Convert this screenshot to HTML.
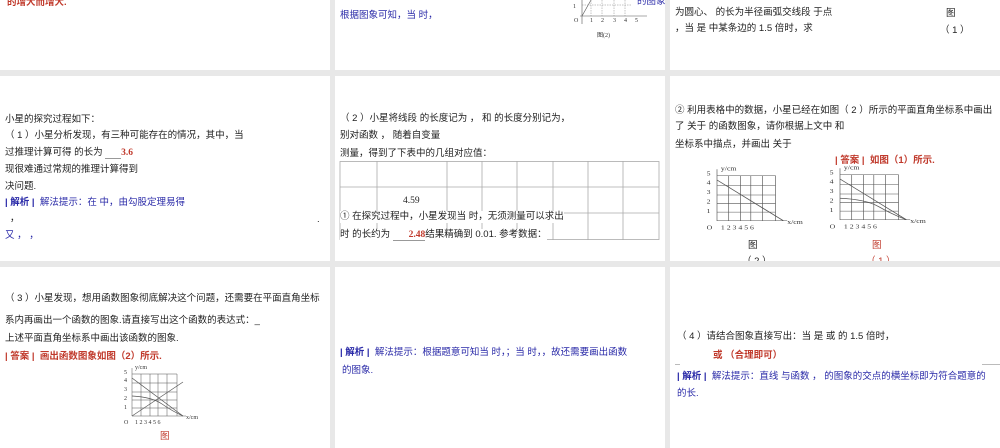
<!DOCTYPE html>
<html><head><meta charset="utf-8"><style>
body{margin:0;width:1000px;height:448px;background:#e8e8e8;position:relative;overflow:hidden;font-family:"Liberation Sans","Noto Sans CJK SC",sans-serif;font-size:9.5px;color:#222}
.p{position:absolute;background:#fff;overflow:hidden}
.t{position:absolute;white-space:nowrap;line-height:12px}
.r{color:#c0392b}.b{color:#2a2aa8}
.bold{font-weight:bold}
svg text{font-family:"Liberation Serif",serif;font-size:6px;fill:#333}
</style></head><body>
<!-- row1 -->
<div class="p" style="left:0;top:0;width:330px;height:70px">
<div class="t r bold" style="left:7px;top:-3px">的增大而增大.</div></div>
<div class="p" style="left:335px;top:0;width:330px;height:70px">
<div class="t b" style="left:5px;top:10px">根据图象可知，当 时，</div>
<svg style="position:absolute;left:237px;top:0" width="75" height="40">
<line x1="10" y1="0" x2="10" y2="24" stroke="#555" stroke-width=".6"/>
<line x1="8" y1="16" x2="75" y2="16" stroke="#555" stroke-width=".6"/>
<line x1="10" y1="16" x2="19" y2="0" stroke="#555" stroke-width=".6"/>
<line x1="10" y1="5" x2="60" y2="5" stroke="#888" stroke-width=".5" stroke-dasharray="1.5 1"/>
<g stroke="#888" stroke-width=".5" stroke-dasharray="1.5 1"><line x1="19" y1="0" x2="19" y2="16"/><line x1="30" y1="0" x2="30" y2="16"/><line x1="42" y1="0" x2="42" y2="16"/><line x1="53" y1="0" x2="53" y2="16"/></g>
<text x="1" y="8">1</text><text x="2" y="22">O</text><text x="18" y="22">1</text><text x="29" y="22">2</text><text x="41" y="22">3</text><text x="52" y="22">4</text><text x="63" y="22">5</text>
<text x="25" y="37">图(2)</text></svg>
<div class="t b" style="left:302px;top:-4px">的图象</div></div>
<div class="p" style="left:670px;top:0;width:330px;height:70px">
<div class="t" style="left:5px;top:7px">为圆心、 的长为半径画弧交线段 于点</div>
<div class="t" style="left:5px;top:23px">，当 是 中某条边的 1.5 倍时，求</div>
<div class="t" style="left:276px;top:8px">图</div>
<div class="t" style="left:270px;top:25px">（ 1 ）</div></div>
<!-- row2 -->
<div class="p" style="left:0;top:76px;width:330px;height:185px">
<div class="t" style="left:5px;top:38px">小星的探究过程如下：</div>
<div class="t" style="left:5px;top:54px">（ 1 ）小星分析发现，有三种可能存在的情况，其中，当</div>
<div class="t" style="left:5px;top:71px">过推理计算可得 的长为 <span style="border-bottom:1px solid #999">&nbsp;&nbsp;&nbsp;&nbsp;&nbsp;&nbsp;</span><span class="r bold" style="font-family:'Liberation Serif',serif">3.6</span></div>
<div class="t" style="left:5px;top:88px">现很难通过常规的推理计算得到</div>
<div class="t" style="left:5px;top:105px">决问题.</div>
<div class="t b" style="left:5px;top:121px"><b>| 解析 |</b>&nbsp; 解法提示：在 中，由勾股定理易得</div>
<div class="t" style="left:10px;top:137px">，</div><div class="t" style="left:317px;top:138px">.</div>
<div class="t b" style="left:5px;top:154px">又 ， ，</div></div>
<div class="p" style="left:335px;top:76px;width:330px;height:185px">
<div class="t" style="left:5px;top:37px">（ 2 ）小星将线段 的长度记为 ， 和 的长度分别记为，</div>
<div class="t" style="left:5px;top:54px">别对函数 ， 随着自变量</div>
<div class="t" style="left:5px;top:72px">测量，得到了下表中的几组对应值：</div>
<svg style="position:absolute;left:4px;top:85px" width="322" height="80"><g stroke="#aaa" stroke-width=".8" fill="none">
<rect x="1" y=".5" width="319" height="78"/><line x1="1" y1="26" x2="320" y2="26"/><line x1="1" y1="52" x2="320" y2="52"/>
<line x1="38" y1="0" x2="38" y2="79"/><line x1="108" y1="0" x2="108" y2="79"/><line x1="143" y1="0" x2="143" y2="79"/><line x1="178" y1="0" x2="178" y2="79"/><line x1="214" y1="0" x2="214" y2="79"/><line x1="249" y1="0" x2="249" y2="79"/><line x1="284" y1="0" x2="284" y2="79"/></g></svg>
<div class="t" style="left:68px;top:119px;font-family:'Liberation Serif',serif">4.59</div>
<div class="t" style="left:5px;top:135px;background:#fff">① 在探究过程中，小星发现当 时，无须测量可以求出</div>
<div class="t" style="left:5px;top:153px;background:#fff">时 的长约为 <span style="border-bottom:1px solid #999">&nbsp;&nbsp;&nbsp;&nbsp;&nbsp;&nbsp;<span class="r bold" style="font-family:'Liberation Serif',serif">2.48</span></span>结果精确到 0.01. 参考数据：</div></div>
<div class="p" style="left:670px;top:76px;width:330px;height:185px">
<div class="t" style="left:5px;top:29px">② 利用表格中的数据，小星已经在如图（ 2 ）所示的平面直角坐标系中画出</div>
<div class="t" style="left:5px;top:45px">了 关于 的函数图象，请你根据上文中 和</div>
<div class="t" style="left:5px;top:63px">坐标系中描点，并画出 关于</div>
<div class="t r bold" style="left:165px;top:79px">| 答案 |&nbsp; 如图（1）所示.</div>
<svg style="position:absolute;left:34px;top:89px" width="117" height="75" viewBox="0 0 90 70" preserveAspectRatio="none"><g stroke="#555" stroke-width=".5" fill="none">
<path d="M10 10H55V52M10 19H55M10 28H55M10 36H55M10 44H55M19 10V52M28 10V52M36 10V52M45 10V52"/>
<path d="M10 4V52H64"/><line x1="10" y1="14" x2="61" y2="52" stroke-width=".7"/></g>
<text x="2" y="10">5</text><text x="2" y="18">4</text><text x="2" y="27">3</text><text x="2" y="36">2</text><text x="2" y="45">1</text><text x="13" y="5">y/cm</text>
<text x="2" y="60">O</text><text x="13" y="60">1 2 3 4 5 6</text><text x="64" y="55">x/cm</text></svg>
<svg style="position:absolute;left:157px;top:88px" width="117" height="75" viewBox="0 0 90 70" preserveAspectRatio="none"><g stroke="#555" stroke-width=".5" fill="none">
<path d="M10 10H55V52M10 19H55M10 28H55M10 36H55M10 44H55M19 10V52M28 10V52M36 10V52M45 10V52"/>
<path d="M10 4V52H64"/><line x1="10" y1="14" x2="61" y2="52" stroke-width=".7"/><path d="M10 32Q30 33 40 40T61 52" stroke-width=".7"/></g>
<text x="2" y="10">5</text><text x="2" y="18">4</text><text x="2" y="27">3</text><text x="2" y="36">2</text><text x="2" y="45">1</text><text x="13" y="5">y/cm</text>
<text x="2" y="60">O</text><text x="13" y="60">1 2 3 4 5 6</text><text x="64" y="55">x/cm</text></svg>
<div class="t" style="left:78px;top:164px">图</div><div class="t r" style="left:202px;top:164px">图</div>
<div class="t" style="left:72px;top:180px">（ 2 ）</div><div class="t r" style="left:196px;top:180px">（ 1 ）</div></div>
<!-- row3 -->
<div class="p" style="left:0;top:267px;width:330px;height:181px">
<div class="t" style="left:5px;top:26px">（ 3 ）小星发现，想用函数图象彻底解决这个问题，还需要在平面直角坐标</div>
<div class="t" style="left:5px;top:48px">系内再画出一个函数的图象.请直接写出这个函数的表达式：_</div>
<div class="t" style="left:5px;top:66px">上述平面直角坐标系中画出该函数的图象.</div>
<div class="t r bold" style="left:5px;top:84px">| 答案 |&nbsp; 画出函数图象如图（2）所示.</div>
<svg style="position:absolute;left:120px;top:97px" width="90" height="70"><g stroke="#555" stroke-width=".5" fill="none">
<path d="M12 10H57V52M12 19H57M12 28H57M12 36H57M12 44H57M21 10V52M30 10V52M38 10V52M47 10V52"/>
<path d="M12 4V52H66"/><line x1="12" y1="14" x2="63" y2="52" stroke-width=".7"/><path d="M12 32Q32 33 42 40T63 52" stroke-width=".7"/><line x1="12" y1="52" x2="63" y2="18" stroke-width=".7"/></g>
<text x="4" y="10">5</text><text x="4" y="18">4</text><text x="4" y="27">3</text><text x="4" y="36">2</text><text x="4" y="45">1</text><text x="15" y="5">y/cm</text>
<text x="4" y="60">O</text><text x="15" y="60">1 2 3 4 5 6</text><text x="66" y="55">x/cm</text></svg>
<div class="t r" style="left:160px;top:164px">图</div></div>
<div class="p" style="left:335px;top:267px;width:330px;height:181px">
<div class="t b" style="left:5px;top:80px"><b>| 解析 |</b>&nbsp; 解法提示：根据题意可知当 时，；当 时，，故还需要画出函数</div>
<div class="t b" style="left:7px;top:98px">的图象.</div></div>
<div class="p" style="left:670px;top:267px;width:330px;height:181px">
<div class="t" style="left:7px;top:64px">（ 4 ）请结合图象直接写出：当 是 或 的 1.5 倍时，</div>
<div class="t r bold" style="left:43px;top:83px">或 （合理即可）</div>
<div style="position:absolute;left:5px;top:97px;width:5px;height:1px;background:#bbb"></div>
<div style="position:absolute;left:312px;top:97px;width:18px;height:1px;background:#bbb"></div>
<div class="t b" style="left:7px;top:104px"><b>| 解析 |</b>&nbsp; 解法提示：直线 与函数 ， 的图象的交点的横坐标即为符合题意的</div>
<div class="t b" style="left:7px;top:121px">的长.</div></div>
</body></html>
